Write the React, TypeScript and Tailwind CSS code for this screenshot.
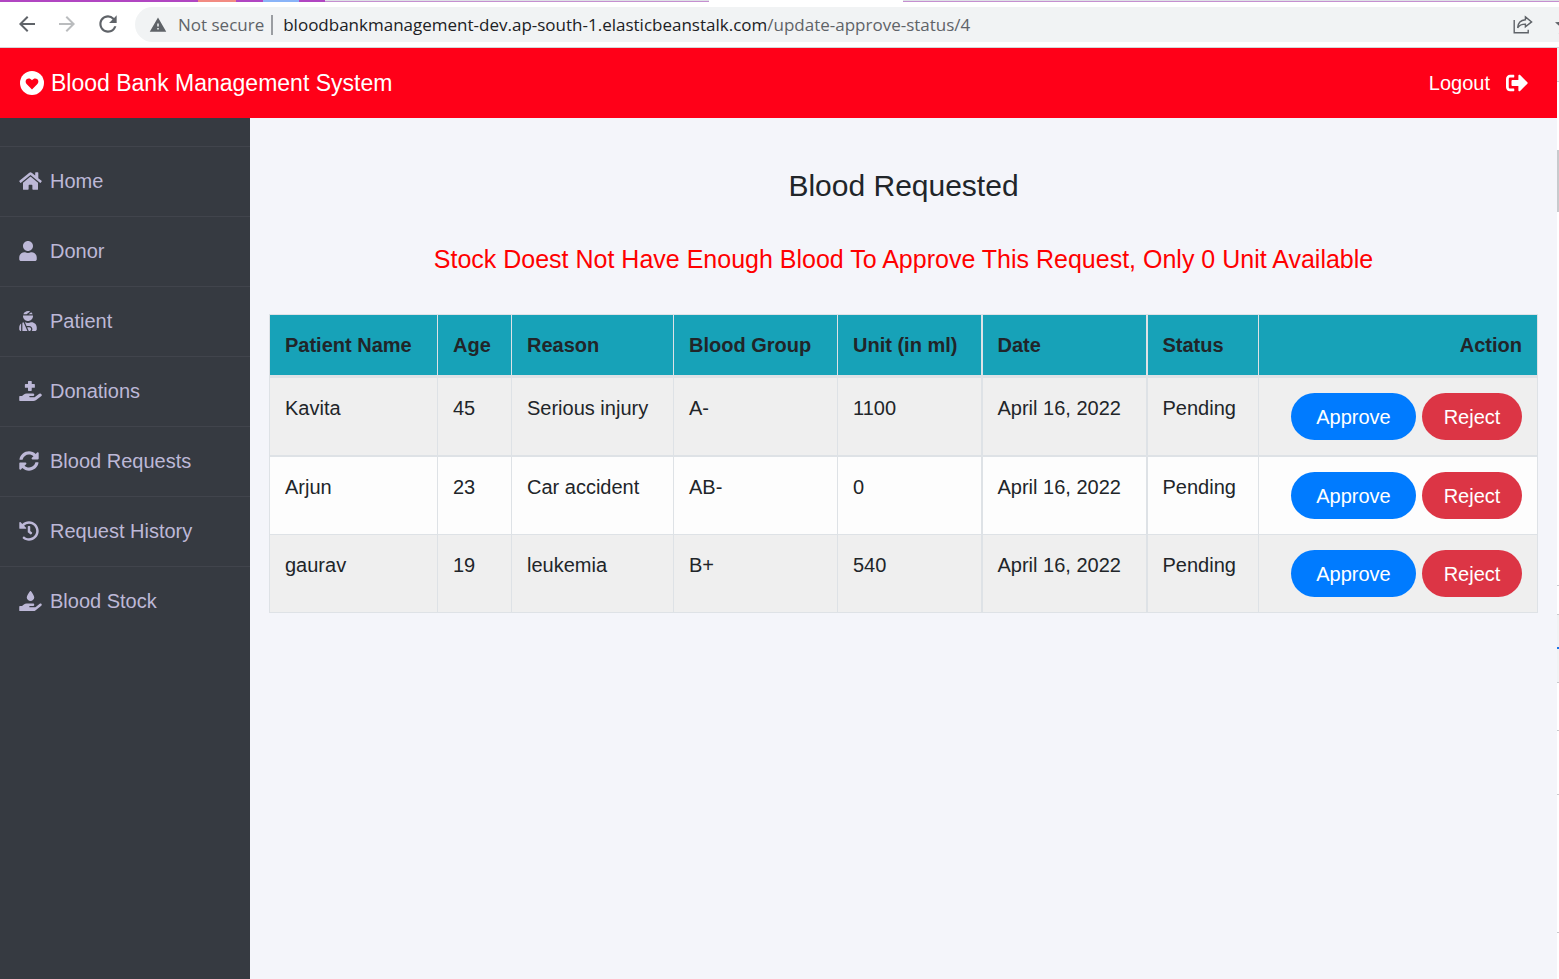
import type { ReactNode } from "react";
import {
  FaHandHoldingMedical,
  FaHandHoldingWater,
  FaHistory,
  FaHome,
  FaSignOutAlt,
  FaSyncAlt,
  FaUser,
  FaUserInjured,
} from "react-icons/fa";
import {
  MdArrowBack,
  MdArrowForward,
  MdRefresh,
  MdStarBorder,
  MdWarning,
} from "react-icons/md";

const navItems: { label: string; icon: ReactNode }[] = [
  { label: "Home", icon: <FaHome className="h-5 w-[23px]" /> },
  { label: "Donor", icon: <FaUser className="h-5 w-[18px]" /> },
  { label: "Patient", icon: <FaUserInjured className="h-5 w-[18px]" /> },
  { label: "Donations", icon: <FaHandHoldingMedical className="h-5 w-[23px]" /> },
  { label: "Blood Requests", icon: <FaSyncAlt className="size-5" /> },
  { label: "Request History", icon: <FaHistory className="size-5" /> },
  { label: "Blood Stock", icon: <FaHandHoldingWater className="h-5 w-[23px]" /> },
];

const requests = [
  { name: "Kavita", age: 45, reason: "Serious injury", group: "A-", unit: 1100 },
  { name: "Arjun", age: 23, reason: "Car accident", group: "AB-", unit: 0 },
  { name: "gaurav", age: 19, reason: "leukemia", group: "B+", unit: 540 },
];

const columns = [
  { label: "Patient Name", style: "w-[168px] border-x" },
  { label: "Age", style: "w-[74px] border-x" },
  { label: "Reason", style: "w-[162px] border-x" },
  { label: "Blood Group", style: "w-[164px] border-x" },
  { label: "Unit (in ml)", style: "w-36 border-x" },
  { label: "Date", style: "w-[165px] border-x-2" },
  { label: "Status", style: "w-28 border-x" },
];

function HeartCircle() {
  return (
    <svg viewBox="0 0 24 24" className="size-6" aria-hidden="true">
      <circle cx="12" cy="12" r="12" fill="#fff" />
      <path
        d="M12 18.4 6.6 12.9C5.2 11.4 5.3 9.1 6.9 8 8.4 6.9 10.5 7.3 12 9.2 13.5 7.3 15.6 6.9 17.1 8 18.7 9.1 18.8 11.4 17.4 12.9Z"
        fill="#ff0018"
      />
    </svg>
  );
}

function ShareIcon() {
  return (
    <svg
      viewBox="0 0 20 20"
      className="size-5"
      fill="none"
      stroke="#5f6368"
      strokeWidth="1.4"
      aria-hidden="true"
    >
      <path d="M1.2 5V17.8H15.2V14.7" />
      <path d="M12.4 1.9 18.6 6.9 12.4 11.9V9.1C8.6 9.1 6.2 10.3 4.6 12.9 5 7.9 8.2 5.1 12.4 4.8Z" />
    </svg>
  );
}

function BrowserBar() {
  return (
    <div className="flex flex-col border-b border-[#d5d6d9] bg-white font-['Open_Sans','Noto_Sans',sans-serif]">
      <div className="flex h-[2px]">
        <span className="w-[198px] bg-[#b146c2]" />
        <span className="w-[38px] bg-[#f28b82]" />
        <span className="w-[27px] bg-[#b146c2]" />
        <span className="w-9 bg-[#8ab4f8]" />
        <span className="w-[26px] bg-[#b146c2]" />
        <span className="w-96 border-b border-[#c58fd0] bg-[#dee1e6]" />
        <span className="w-[194px] bg-white" />
        <span className="grow border-b border-[#c58fd0] bg-[#dee1e6]" />
      </div>
      <div className="flex h-[45px] items-center text-[#5f6368]">
        <div className="flex w-[135px] shrink-0 items-center gap-4 pb-[2px] pl-[15px]">
          <button type="button" aria-label="Back">
            <MdArrowBack size={24} />
          </button>
          <button type="button" aria-label="Forward" className="text-[#babcbe]">
            <MdArrowForward size={24} />
          </button>
          <button type="button" aria-label="Reload">
            <MdRefresh size={26} />
          </button>
        </div>
        <div className="flex h-[35px] min-w-0 grow items-center overflow-hidden rounded-l-full bg-[#f1f3f4] pl-[14px] text-[17px]">
          <MdWarning size={18} className="shrink-0" />
          <span className="ml-[11px] shrink-0">Not secure</span>
          <span className="mr-[10px] ml-[7px] h-5 w-[2px] shrink-0 bg-[#9a9da1]" />
          <span className="min-w-0 grow truncate">
            <span className="text-[#202124]">bloodbankmanagement-dev.ap-south-1.elasticbeanstalk.com</span>
            /update-approve-status/4
          </span>
          <button type="button" aria-label="Share" className="mr-5 shrink-0">
            <ShareIcon />
          </button>
          <button type="button" aria-label="Bookmark" className="-mr-[18px] shrink-0">
            <MdStarBorder size={24} />
          </button>
        </div>
      </div>
    </div>
  );
}

function Sidebar() {
  return (
    <nav className="w-[250px] shrink-0 bg-[#363a41] pt-7">
      <ul className="border-t border-[#41444c]">
        {navItems.map((item) => (
          <li key={item.label} className="border-b border-[#41444c] last:border-b-0">
            <a href="#" className="flex h-[69px] items-center pb-[2px] pl-[19px] text-[#bdb8d7]">
              <span className="w-[31px]">{item.icon}</span>
              {item.label}
            </a>
          </li>
        ))}
      </ul>
    </nav>
  );
}

function RequestTable() {
  return (
    <table className="w-full table-fixed border-collapse border border-[#dee2e6] text-left">
      <thead>
        <tr className="h-[62px] border-b-3 border-[#dee2e6] bg-[#17a2b8]">
          {columns.map((column) => (
            <th key={column.label} className={`border-[#dee2e6] px-[15px] font-bold ${column.style}`}>
              {column.label}
            </th>
          ))}
          <th className="px-[15px] text-right font-bold">Action</th>
        </tr>
      </thead>
      <tbody>
        {requests.map((request) => (
          <tr
            key={request.name}
            className="border-b border-[#dee2e6] bg-[#efefef] align-top first:border-b-2 even:bg-[#fdfdfd] [&>td]:border-x [&>td]:border-[#dee2e6] [&>td]:px-[15px] [&>td]:py-[15px] [&>td:nth-child(6)]:border-x-2"
          >
            <td>{request.name}</td>
            <td>{request.age}</td>
            <td>{request.reason}</td>
            <td>{request.group}</td>
            <td>{request.unit}</td>
            <td>April 16, 2022</td>
            <td>Pending</td>
            <td>
              <div className="flex justify-end gap-[6px] text-white">
                <button type="button" className="h-[47px] w-[125px] rounded-full bg-[#007bff]">
                  Approve
                </button>
                <button type="button" className="h-[47px] w-[100px] rounded-full bg-[#dc3545]">
                  Reject
                </button>
              </div>
            </td>
          </tr>
        ))}
      </tbody>
    </table>
  );
}

/* Sliver of the neighbouring panel at the window's right edge. */
function EdgeStrip() {
  return (
    <div className="flex w-[2px] shrink-0 flex-col bg-white" aria-hidden="true">
      <span className="h-[34px] border-b border-[#c8cacd] bg-[#f1f1f1]" />
      <span className="mt-[68px] h-[62px] bg-[#c8cacd]" />
      <span className="mt-[373px] h-[30px] border-y border-[#c8cacd]" />
      <span className="h-8 bg-[#f1f3f4]" />
      <span className="h-[2px] bg-[#1a73e8]" />
      <span className="h-[34px] border-b border-[#c8cacd] bg-[#f1f3f4]" />
      <span className="h-12 border-b border-[#c8cacd]" />
      <span className="h-16 border-b border-[#c8cacd]" />
      <span className="h-[138px] border-b border-[#c8cacd]" />
    </div>
  );
}

export default function App() {
  return (
    <div className="flex min-h-screen flex-col bg-white font-['Liberation_Sans',Arial,sans-serif] text-[20px] leading-[30px] text-[#212529]">
      <BrowserBar />
      <div className="flex grow">
        <div className="flex min-w-0 grow flex-col">
          <header className="flex h-[70px] items-center justify-between bg-[#ff0018] pr-[29px] pl-5 text-white">
            <a href="#" className="flex items-center gap-[7px] pb-px text-[23px]">
              <HeartCircle />
              Blood Bank Management System
            </a>
            <a href="#" className="flex items-center gap-4">
              Logout
              <FaSignOutAlt size={22} />
            </a>
          </header>
          <div className="flex grow">
            <Sidebar />
            <main className="min-w-0 grow bg-[#f4f5fa] px-[19px] pt-[50px]">
              <h1 className="text-center text-[30px] leading-9">Blood Requested</h1>
              <p className="my-[37px] text-center text-[25px] leading-9 text-[#ff0000]">
                Stock Doest Not Have Enough Blood To Approve This Request, Only 0 Unit Available
              </p>
              <RequestTable />
            </main>
          </div>
        </div>
        <EdgeStrip />
      </div>
    </div>
  );
}
